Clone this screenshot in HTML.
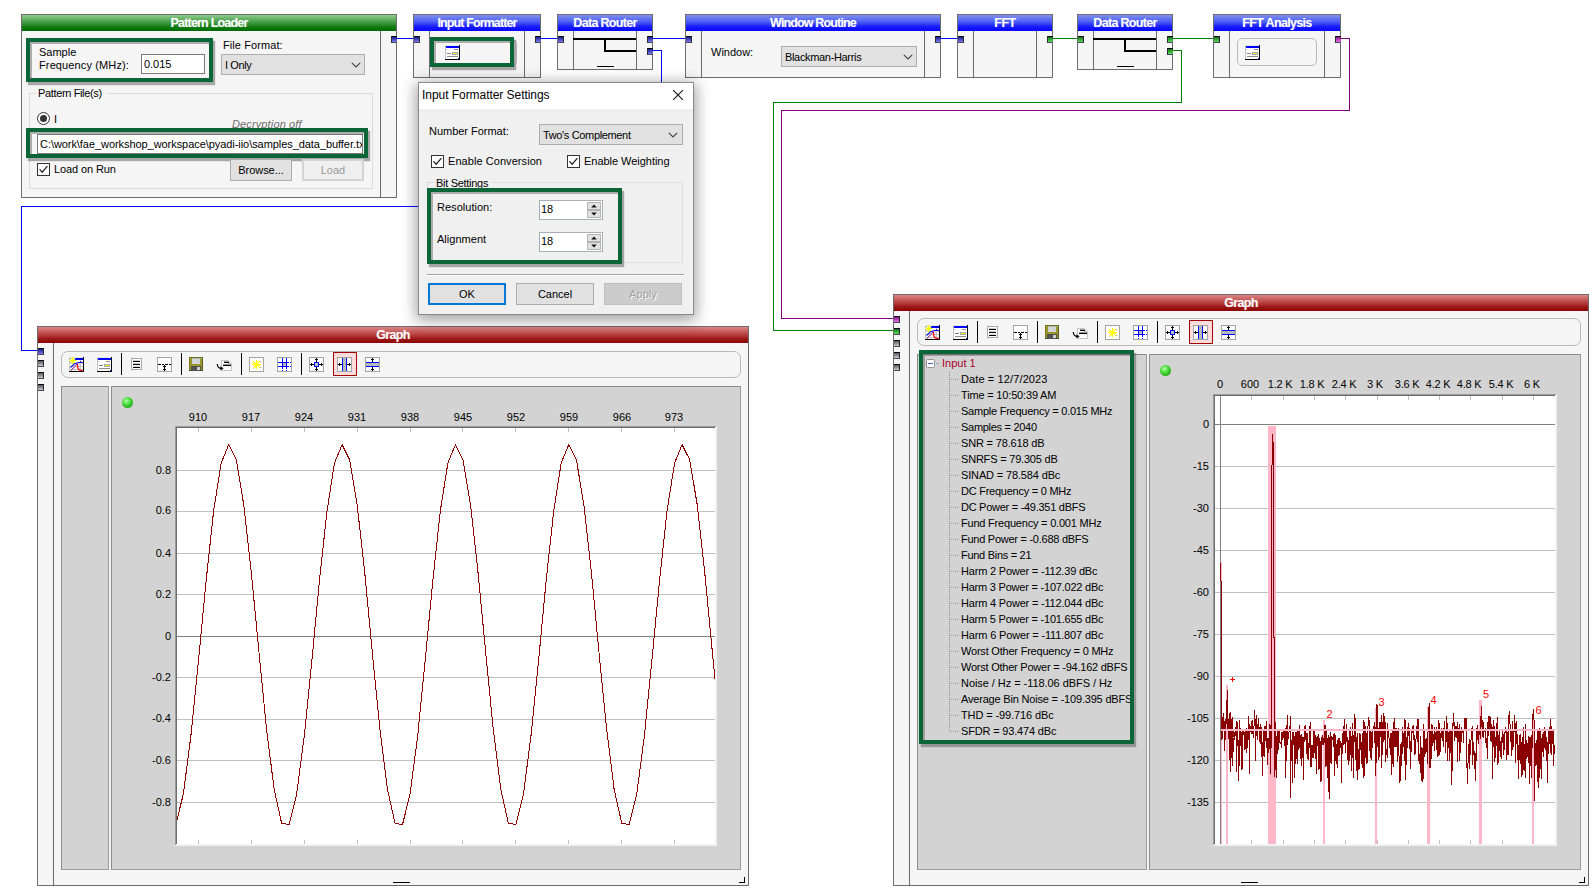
<!DOCTYPE html>
<html><head><meta charset="utf-8"><title>VisualAnalog</title>
<style>
html,body{margin:0;padding:0}
body{width:1596px;height:894px;position:relative;overflow:hidden;background:#fff;font-family:"Liberation Sans",sans-serif;font-size:11px;color:#000;line-height:13px}
div,span.a{position:absolute;box-sizing:border-box;white-space:nowrap}
.pn{border:1px solid #6c6c6c;background:#f5f5f5}
.tb{left:0;top:0;right:0;height:16px;color:#fff;font-weight:bold;font-size:12.5px;text-align:center;line-height:17px;letter-spacing:-0.8px;text-shadow:0 0 1px rgba(255,255,255,.35)}
.tb.b{background:linear-gradient(#7f90ee 0%,#4f62f4 40%,#1518ff 75%,#0505ff 100%)}
.tb.g{background:linear-gradient(#90cc90 0%,#4ca24c 40%,#117a11 75%,#006a00 100%)}
.tb.r{background:linear-gradient(#dc8585 0%,#c04c4c 40%,#9c1515 75%,#8e0505 100%)}
.vl{width:1px;background:#6c6c6c;top:16px;bottom:0}
.pt{width:6px;height:7px;border-top:1px solid #08081c;border-bottom:1px solid #4a4a5a}
.pt.L{border-right:1px solid #2a2a3a}
.pt.R{border-left:1px solid #2a2a3a}
.pb{background:linear-gradient(#1e1e7a,#4a4ac0 50%,#7c7cf0)}
.pg{background:linear-gradient(#1a6a1a,#34a834 50%,#58dc58)}
.pp{background:linear-gradient(#7a1a7a,#b83cb8 50%,#ec6cec)}
.py{background:linear-gradient(#585858,#8e8e8e 50%,#c8c8c8)}
.hl{border:4px solid #0a6636;box-shadow:2px 3px 1px 0 rgba(90,90,90,.5)}
.hl:before{content:"";position:absolute;left:0;top:0;right:-1px;bottom:-1px;box-shadow:inset 2px 2px 0 0 rgba(90,90,90,.45)}
.inp{background:#fff;border:1px solid #7a7a7a}
.cmb{background:#e1e1e1;border:1px solid #adadad}
.btn{background:#e1e1e1;border:1px solid #adadad;text-align:center}
.cb{width:13px;height:13px;background:#fff;border:1px solid #333}
.grp{border:1px solid #dcdcdc}
.sunk{background:#d3d3d3;border:1px solid #8c8c8c;border-right-color:#9c9c9c;border-bottom-color:#9c9c9c}
.tl{border:1px solid #b9b9b9;border-radius:7px;background:#f5f5f5}
.t{position:absolute;white-space:nowrap}
</style></head>
<body>
<svg style="position:absolute;left:0;top:0" width="1596" height="894" viewBox="0 0 1596 894" shape-rendering="crispEdges" fill="none"><path d="M396 38.5H414" stroke="#0000ff" stroke-width="1"/><path d="M540 38.5H558" stroke="#0000ff" stroke-width="1"/><path d="M652 38.5H686" stroke="#0000ff" stroke-width="1"/><path d="M652 50.5H661.5V206.5H21.5V350.5H38" stroke="#0000ff" stroke-width="1"/><path d="M940 38.5H958" stroke="#0000ff" stroke-width="1"/><path d="M1052 38.5H1078" stroke="#008000" stroke-width="1"/><path d="M1172 38.5H1214" stroke="#008000" stroke-width="1"/><path d="M1172 50.5H1181.5V102.5H773.5V330.5H894" stroke="#008000" stroke-width="1"/><path d="M1340 38.5H1349.5V110.5H781.5V318.5H894" stroke="#800080" stroke-width="1"/></svg>
<div class="pn" style="left:21px;top:14px;width:376px;height:184px"><div class="tb g" style="letter-spacing:-0.79px">Pattern Loader</div><div class="vl" style="left:358px"></div></div>
<div class="pt pb R" style="left:391px;top:36px"></div>
<div class="hl" style="left:26px;top:38px;width:187px;height:44px"></div>
<div class="t" style="left:39px;top:46px;">Sample</div>
<div class="t" style="left:39px;top:59px;letter-spacing:0.123px;">Frequency (MHz):</div>
<div class="inp" style="left:141px;top:54px;width:64px;height:20px"></div>
<div class="t" style="left:144px;top:58px;letter-spacing:-0.026px;">0.015</div>
<div class="t" style="left:223px;top:39px;letter-spacing:0.084px;">File Format:</div>
<div class="cmb" style="left:221px;top:54px;width:144px;height:21px"></div>
<div class="t" style="left:225px;top:59px;letter-spacing:-0.406px;">I Only</div>
<svg style="position:absolute;left:351px;top:62px" width="10" height="6" viewBox="0 0 10 6"><path d="M0.8 0.8L5 5L9.2 0.8" fill="none" stroke="#404040" stroke-width="1.1"/></svg>
<div class="grp" style="left:29px;top:93px;width:344px;height:96px"></div>
<div style="left:36px;top:86px;width:70px;height:13px;background:#f5f5f5"></div>
<div class="t" style="left:38px;top:87px;letter-spacing:-0.359px;">Pattern File(s)</div>
<div style="left:37px;top:112px;width:13px;height:13px;border-radius:7px;border:1px solid #333;background:#fff"></div>
<div style="left:40px;top:115px;width:7px;height:7px;border-radius:4px;background:#333"></div>
<div class="t" style="left:54px;top:113px;">I</div>
<div class="t" style="left:232px;top:118px;letter-spacing:0.130px;font-style:italic;color:#6d6d6d">Decryption off</div>
<div style="left:28px;top:130px;width:338px;height:27px;background:#f5f5f5"></div>
<div class="hl" style="left:26px;top:128px;width:342px;height:30px"></div>
<div class="inp" style="left:37px;top:134px;width:326px;height:20px;overflow:hidden"></div>
<div style="left:38px;top:135px;width:324px;height:18px;overflow:hidden"><span class="a" style="left:2px;top:3px;letter-spacing:-0.06px">C:\work\fae_workshop_workspace\pyadi-iio\samples_data_buffer.txt</span></div>
<div class="cb" style="left:37px;top:163px"></div><svg style="position:absolute;left:37px;top:163px" width="13" height="13" viewBox="0 0 13 13"><path d="M2.6 6.4L5.2 9.2L10.4 3.2" fill="none" stroke="#222" stroke-width="1.25"/></svg>
<div class="t" style="left:54px;top:163px;letter-spacing:-0.109px;">Load on Run</div>
<div class="btn" style="left:230px;top:159px;width:62px;height:22px;line-height:20px;letter-spacing:-0.040px;">Browse...</div>
<div class="btn" style="left:302px;top:159px;width:62px;height:22px;line-height:20px;color:#9a9a9a;background:#efefef;border:2px solid #d4d4d4;line-height:18px">Load</div>
<div class="pn" style="left:413px;top:14px;width:128px;height:64px"><div class="tb b" style="letter-spacing:-0.88px">Input Formatter</div><div class="vl" style="left:15px"></div><div class="vl" style="left:110px"></div></div>
<div class="pt pb L" style="left:414px;top:36px"></div>
<div class="pt pb R" style="left:535px;top:36px"></div>
<div class="tl" style="left:432px;top:39px;width:85px;height:27px;border-radius:5px"></div>
<div class="hl" style="left:430px;top:37px;width:84px;height:30px"></div>
<svg style="position:absolute;left:445px;top:45px" width="15" height="15" viewBox="0 0 15 15" shape-rendering="crispEdges"><rect x="0" y="0" width="15" height="15" fill="#fff"/><rect x="0" y="0" width="15" height="1" fill="#ececdc"/><rect x="0" y="1" width="1" height="13" fill="#c4c4c4"/><rect x="1" y="1" width="13" height="2" fill="#0000ff"/><rect x="1" y="4" width="1" height="1" fill="#a8a8a8"/><rect x="9" y="4" width="4" height="1" fill="#909090"/><rect x="2" y="8" width="4" height="1" fill="#808080"/><rect x="7" y="7" width="6" height="3" fill="#a4a4b0"/><rect x="8" y="8" width="4" height="1" fill="#ffff00"/><rect x="2" y="11" width="11" height="1" fill="#8c8c8c"/><rect x="0" y="14" width="15" height="1" fill="#000"/><rect x="14" y="0" width="1" height="15" fill="#000"/><rect x="13" y="13" width="1" height="1" fill="#0000ff"/></svg>
<div class="pn" style="left:557px;top:14px;width:96px;height:56px"><div class="tb b" style="letter-spacing:-0.68px">Data Router</div><div class="vl" style="left:15px"></div><div class="vl" style="left:78px"></div></div><div class="pt pb L" style="left:558px;top:36px"></div><div class="pt pb R" style="left:647px;top:36px"></div><div class="pt pb R" style="left:647px;top:48px"></div><div style="left:573px;top:38px;width:63px;height:2px;background:#000"></div><div style="left:604px;top:38px;width:2px;height:14px;background:#000"></div><div style="left:605px;top:50px;width:31px;height:2px;background:#000"></div><div style="left:597px;top:66px;width:17px;height:1px;background:#000"></div>
<div class="pn" style="left:685px;top:14px;width:256px;height:64px"><div class="tb b" style="letter-spacing:-0.85px">Window Routine</div><div class="vl" style="left:15px"></div><div class="vl" style="left:238px"></div></div>
<div class="pt pb L" style="left:686px;top:36px"></div>
<div class="pt pb R" style="left:935px;top:36px"></div>
<div class="t" style="left:711px;top:46px;">Window:</div>
<div class="cmb" style="left:781px;top:46px;width:136px;height:21px"></div>
<div class="t" style="left:785px;top:51px;letter-spacing:-0.333px;">Blackman-Harris</div>
<svg style="position:absolute;left:903px;top:54px" width="10" height="6" viewBox="0 0 10 6"><path d="M0.8 0.8L5 5L9.2 0.8" fill="none" stroke="#404040" stroke-width="1.1"/></svg>
<div class="pn" style="left:957px;top:14px;width:96px;height:64px"><div class="tb b" style="letter-spacing:-0.46px">FFT</div><div class="vl" style="left:15px"></div><div class="vl" style="left:78px"></div></div>
<div class="pt pb L" style="left:958px;top:36px"></div>
<div class="pt pg R" style="left:1047px;top:36px"></div>
<div class="pn" style="left:1077px;top:14px;width:96px;height:56px"><div class="tb b" style="letter-spacing:-0.68px">Data Router</div><div class="vl" style="left:15px"></div><div class="vl" style="left:78px"></div></div><div class="pt pg L" style="left:1078px;top:36px"></div><div class="pt pg R" style="left:1167px;top:36px"></div><div class="pt pg R" style="left:1167px;top:48px"></div><div style="left:1093px;top:38px;width:63px;height:2px;background:#000"></div><div style="left:1124px;top:38px;width:2px;height:14px;background:#000"></div><div style="left:1125px;top:50px;width:31px;height:2px;background:#000"></div><div style="left:1117px;top:66px;width:17px;height:1px;background:#000"></div>
<div class="pn" style="left:1213px;top:14px;width:128px;height:64px"><div class="tb b" style="letter-spacing:-0.67px">FFT Analysis</div><div class="vl" style="left:15px"></div><div class="vl" style="left:110px"></div></div>
<div class="pt pg L" style="left:1214px;top:36px"></div>
<div class="pt pp R" style="left:1335px;top:36px"></div>
<div class="tl" style="left:1237px;top:38px;width:80px;height:28px;border-radius:5px"></div>
<svg style="position:absolute;left:1245px;top:45px" width="15" height="15" viewBox="0 0 15 15" shape-rendering="crispEdges"><rect x="0" y="0" width="15" height="15" fill="#fff"/><rect x="0" y="0" width="15" height="1" fill="#ececdc"/><rect x="0" y="1" width="1" height="13" fill="#c4c4c4"/><rect x="1" y="1" width="13" height="2" fill="#0000ff"/><rect x="1" y="4" width="1" height="1" fill="#a8a8a8"/><rect x="9" y="4" width="4" height="1" fill="#909090"/><rect x="2" y="8" width="4" height="1" fill="#808080"/><rect x="7" y="7" width="6" height="3" fill="#a4a4b0"/><rect x="8" y="8" width="4" height="1" fill="#ffff00"/><rect x="2" y="11" width="11" height="1" fill="#8c8c8c"/><rect x="0" y="14" width="15" height="1" fill="#000"/><rect x="14" y="0" width="1" height="15" fill="#000"/><rect x="13" y="13" width="1" height="1" fill="#0000ff"/></svg>
<div class="pn" style="left:37px;top:326px;width:712px;height:560px"><div class="tb r" style="letter-spacing:-0.65px">Graph</div><div class="vl" style="left:15px"></div></div>
<div class="pt pb L" style="left:38px;top:348px"></div>
<div class="pt py L" style="left:38px;top:360px"></div>
<div class="pt py L" style="left:38px;top:372px"></div>
<div class="pt py L" style="left:38px;top:384px"></div>
<div class="tl" style="left:61px;top:351px;width:680px;height:27px"></div>
<svg style="position:absolute;left:69px;top:357px" width="15" height="15" viewBox="0 0 15 15" shape-rendering="crispEdges"><rect x="0" y="0" width="15" height="15" fill="#fff"/><rect x="0" y="0" width="15" height="1" fill="#ececdc"/><rect x="0" y="9" width="14" height="1" fill="#c4c4c4"/><rect x="0" y="12" width="14" height="1" fill="#c4c4c4"/><rect x="0" y="6" width="14" height="1" fill="#dcdcdc"/><rect x="11" y="3" width="1" height="11" fill="#c4c4c4"/><rect x="5" y="5" width="1" height="9" fill="#d4d4d4"/><rect x="0" y="1" width="1" height="13" fill="#c8c8c8"/><rect x="6" y="1" width="8" height="2" fill="#0000ff"/><path d="M1.5 10.5 L5 7 L8.5 5.8 Q9.5 5.5 10.5 5.5 H14" fill="none" stroke="#0000ff" stroke-width="1.1" shape-rendering="auto"/><path d="M2 13.5 L8.5 6.5" fill="none" stroke="#800080" stroke-width="1.1" stroke-dasharray="1.2 0.7" shape-rendering="auto"/><rect x="11" y="4" width="1" height="1" fill="#800080"/><path d="M8.5 7 C8.3 10 9.5 12.8 11 13.4 H13.6" fill="none" stroke="#ff0000" stroke-width="1.2" shape-rendering="auto"/><path d="M0 3.5H7.5M3.5 0V7.5M1 1L6.2 6.2M6.2 0.8L0.8 6.5" stroke="#ffff00" stroke-width="1.05" fill="none" shape-rendering="auto"/><rect x="3" y="3" width="1" height="1" fill="#ffff00"/><rect x="1" y="1" width="1" height="1" fill="#8a8ab0"/><rect x="5" y="1" width="1" height="1" fill="#b0b080"/><rect x="1" y="5" width="1" height="1" fill="#b0b0c0"/><rect x="0" y="14" width="15" height="1" fill="#000"/><rect x="14" y="0" width="1" height="15" fill="#000"/></svg>
<svg style="position:absolute;left:97px;top:357px" width="15" height="15" viewBox="0 0 15 15" shape-rendering="crispEdges"><rect x="0" y="0" width="15" height="15" fill="#fff"/><rect x="0" y="0" width="15" height="1" fill="#ececdc"/><rect x="0" y="1" width="1" height="13" fill="#c4c4c4"/><rect x="1" y="1" width="13" height="2" fill="#0000ff"/><rect x="1" y="4" width="1" height="1" fill="#a8a8a8"/><rect x="9" y="4" width="4" height="1" fill="#909090"/><rect x="2" y="8" width="4" height="1" fill="#808080"/><rect x="7" y="7" width="6" height="3" fill="#a4a4b0"/><rect x="8" y="8" width="4" height="1" fill="#ffff00"/><rect x="2" y="11" width="11" height="1" fill="#8c8c8c"/><rect x="0" y="14" width="15" height="1" fill="#000"/><rect x="14" y="0" width="1" height="15" fill="#000"/><rect x="13" y="13" width="1" height="1" fill="#0000ff"/></svg>
<svg style="position:absolute;left:131px;top:358px" width="11" height="12" viewBox="0 0 11 12" shape-rendering="crispEdges"><rect x="0" y="0" width="11" height="12" fill="#a8a8a8"/><rect x="1" y="1" width="9" height="10" fill="#fff"/><rect x="2" y="3" width="7" height="1" fill="#000"/><rect x="2" y="6" width="7" height="1" fill="#000"/><rect x="2" y="9" width="7" height="1" fill="#000"/><rect x="2" y="2" width="7" height="1" fill="#d0d0d0"/><rect x="2" y="5" width="7" height="1" fill="#d0d0d0"/><rect x="2" y="8" width="7" height="1" fill="#d0d0d0"/></svg>
<svg style="position:absolute;left:157px;top:357px" width="15" height="15" viewBox="0 0 15 15" shape-rendering="crispEdges"><rect x="0" y="0" width="15" height="15" fill="#a4a4a4"/><rect x="1" y="1" width="13" height="13" fill="#fff"/><rect x="1" y="7" width="3" height="1" fill="#000"/><rect x="5" y="7" width="2" height="1" fill="#000"/><rect x="8" y="7" width="3" height="1" fill="#000"/><rect x="12" y="7" width="2" height="1" fill="#000"/><rect x="7" y="8" width="1" height="6" fill="#000"/><rect x="6" y="9" width="3" height="1" fill="#000"/><rect x="6" y="12" width="3" height="1" fill="#000"/></svg>
<svg style="position:absolute;left:189px;top:357px" width="14" height="14" viewBox="0 0 14 14" shape-rendering="crispEdges"><rect x="0" y="0" width="14" height="14" fill="#98982c"/><rect x="0" y="0" width="14" height="1" fill="#6e6e20"/><rect x="0" y="0" width="1" height="14" fill="#7a7a24"/><rect x="13" y="0" width="1" height="14" fill="#5a5a18"/><rect x="0" y="13" width="14" height="1" fill="#4a4a14"/><rect x="3" y="1" width="8" height="6" fill="#d4d4d4"/><rect x="3" y="1" width="8" height="1" fill="#b8b8b8"/><rect x="2" y="9" width="10" height="5" fill="#505050"/><rect x="8" y="10" width="3" height="3" fill="#d0d0d0"/><rect x="12" y="1" width="1" height="1" fill="#e0e0e0"/></svg>
<svg style="position:absolute;left:216px;top:357px" width="17" height="15" viewBox="0 0 17 15" shape-rendering="crispEdges"><path d="M5.5 3.5H12L15.5 6.5V13.5H5.5Z" fill="#fff" stroke="#c4c4c4" stroke-width="1" shape-rendering="auto"/><path d="M12 3.5V6.5H15.5" fill="none" stroke="#c4c4c4" stroke-width="1" shape-rendering="auto"/><rect x="8" y="5" width="5" height="1" fill="#000"/><rect x="7" y="8" width="8" height="1" fill="#000"/><rect x="8" y="4" width="5" height="1" fill="#9a9a9a"/><rect x="7" y="7" width="8" height="1" fill="#9a9a9a"/><path d="M1.2 7 C1.6 10.4 3.4 11.6 6 11.4" fill="none" stroke="#000" stroke-width="1.2" shape-rendering="auto"/><path d="M4.4 9.2L7.6 11.4L4.4 13.4Z" fill="#000" shape-rendering="auto"/></svg>
<svg style="position:absolute;left:249px;top:357px" width="15" height="15" viewBox="0 0 15 15" shape-rendering="crispEdges"><rect x="0" y="0" width="15" height="15" fill="#a4a4a4"/><rect x="1" y="1" width="13" height="13" fill="#fff"/><path d="M3 7.5H12M7.5 3V12M4.2 4.2L10.8 10.8M10.8 4.2L4.2 10.8M3.6 5.8L11.4 9.2M5.8 11.4L9.2 3.6" stroke="#ffff00" stroke-width="1" fill="none" shape-rendering="auto"/><rect x="7" y="7" width="1" height="1" fill="#ffff00"/><rect x="11" y="4" width="1" height="1" fill="#b0b0b0"/><rect x="11" y="10" width="1" height="1" fill="#b0b0b0"/><rect x="4" y="11" width="1" height="1" fill="#c0c0c0"/></svg>
<svg style="position:absolute;left:277px;top:357px" width="15" height="15" viewBox="0 0 15 15" shape-rendering="crispEdges"><rect x="0" y="0" width="15" height="15" fill="#a4a4a4"/><rect x="1" y="1" width="13" height="13" fill="#fff"/><rect x="6" y="6" width="3" height="3" fill="#b8b8b8"/><rect x="5" y="1" width="1" height="11" fill="#0000ff"/><rect x="9" y="1" width="1" height="11" fill="#0000ff"/><rect x="1" y="5" width="11" height="1" fill="#0000ff"/><rect x="1" y="9" width="11" height="1" fill="#0000ff"/><rect x="13" y="5" width="1" height="1" fill="#0000ff"/><rect x="13" y="9" width="1" height="1" fill="#0000ff"/><rect x="5" y="13" width="1" height="1" fill="#0000ff"/><rect x="9" y="13" width="1" height="1" fill="#0000ff"/></svg>
<svg style="position:absolute;left:309px;top:357px" width="15" height="15" viewBox="0 0 15 15" shape-rendering="crispEdges"><rect x="0" y="0" width="15" height="15" fill="#a4a4a4"/><rect x="1" y="1" width="13" height="13" fill="#fff"/><rect x="5" y="5" width="5" height="5" fill="#0000ff"/><rect x="6" y="6" width="3" height="3" fill="#c0c0c0"/><rect x="7" y="2" width="1" height="3" fill="#000"/><rect x="7" y="10" width="1" height="3" fill="#000"/><rect x="2" y="7" width="3" height="1" fill="#000"/><rect x="10" y="7" width="3" height="1" fill="#000"/><rect x="6" y="2" width="3" height="1" fill="#000"/><rect x="7" y="1" width="1" height="1" fill="#000"/><rect x="6" y="12" width="3" height="1" fill="#000"/><rect x="7" y="13" width="1" height="1" fill="#000"/><rect x="2" y="6" width="1" height="3" fill="#000"/><rect x="1" y="7" width="1" height="1" fill="#000"/><rect x="12" y="6" width="1" height="3" fill="#000"/><rect x="13" y="7" width="1" height="1" fill="#000"/></svg>
<div style="left:333px;top:352px;width:24px;height:24px;background:#ffdcdc;border:1px solid #a00000"></div>
<svg style="position:absolute;left:337px;top:357px" width="15" height="15" viewBox="0 0 15 15" shape-rendering="crispEdges"><rect x="0" y="0" width="15" height="15" fill="#a4a4a4"/><rect x="1" y="1" width="13" height="13" fill="#fff"/><rect x="6" y="1" width="3" height="13" fill="#b8b8b8"/><rect x="5" y="1" width="1" height="13" fill="#0000ff"/><rect x="9" y="1" width="1" height="13" fill="#0000ff"/><rect x="1" y="7" width="4" height="1" fill="#000"/><rect x="2" y="6" width="1" height="3" fill="#000"/><rect x="10" y="7" width="4" height="1" fill="#000"/><rect x="12" y="6" width="1" height="3" fill="#000"/></svg>
<svg style="position:absolute;left:365px;top:357px" width="15" height="15" viewBox="0 0 15 15" shape-rendering="crispEdges"><rect x="0" y="0" width="15" height="15" fill="#a4a4a4"/><rect x="1" y="1" width="13" height="13" fill="#fff"/><rect x="1" y="6" width="13" height="3" fill="#b8b8b8"/><rect x="1" y="5" width="13" height="1" fill="#0000ff"/><rect x="1" y="9" width="13" height="1" fill="#0000ff"/><rect x="7" y="1" width="1" height="4" fill="#000"/><rect x="6" y="2" width="3" height="1" fill="#000"/><rect x="7" y="10" width="1" height="4" fill="#000"/><rect x="6" y="12" width="3" height="1" fill="#000"/></svg>
<div style="left:121px;top:353px;width:1px;height:22px;background:#000"></div>
<div style="left:181px;top:353px;width:1px;height:22px;background:#000"></div>
<div style="left:241px;top:353px;width:1px;height:22px;background:#000"></div>
<div style="left:301px;top:353px;width:1px;height:22px;background:#000"></div>
<div class="sunk" style="left:61px;top:386px;width:48px;height:484px"></div>
<div class="sunk" style="left:111px;top:386px;width:630px;height:484px"></div>
<div style="left:122px;top:397px;width:11px;height:11px;border-radius:6px;background:radial-gradient(circle at 40% 35%,#b8ffb0 0%,#50e040 35%,#28b020 70%,#1c8c18 100%)"></div>
<svg style="position:absolute;left:175px;top:426px" width="542" height="420" viewBox="0 0 542 420">
<rect x="0" y="0" width="542" height="420" fill="#fff"/>
<g shape-rendering="crispEdges"><rect x="2" y="44" width="538" height="1" fill="#c0c0c0"/><rect x="2" y="85" width="538" height="1" fill="#c0c0c0"/><rect x="2" y="127" width="538" height="1" fill="#c0c0c0"/><rect x="2" y="168" width="538" height="1" fill="#c0c0c0"/><rect x="2" y="251" width="538" height="1" fill="#c0c0c0"/><rect x="2" y="293" width="538" height="1" fill="#c0c0c0"/><rect x="2" y="334" width="538" height="1" fill="#c0c0c0"/><rect x="2" y="376" width="538" height="1" fill="#c0c0c0"/><rect x="2" y="210" width="538" height="1" fill="#808080"/><rect x="23" y="2" width="1" height="4" fill="#c0c0c0"/><rect x="23" y="414" width="1" height="4" fill="#c0c0c0"/><rect x="76" y="2" width="1" height="4" fill="#c0c0c0"/><rect x="76" y="414" width="1" height="4" fill="#c0c0c0"/><rect x="129" y="2" width="1" height="4" fill="#c0c0c0"/><rect x="129" y="414" width="1" height="4" fill="#c0c0c0"/><rect x="182" y="2" width="1" height="4" fill="#c0c0c0"/><rect x="182" y="414" width="1" height="4" fill="#c0c0c0"/><rect x="235" y="2" width="1" height="4" fill="#c0c0c0"/><rect x="235" y="414" width="1" height="4" fill="#c0c0c0"/><rect x="287" y="2" width="1" height="4" fill="#c0c0c0"/><rect x="287" y="414" width="1" height="4" fill="#c0c0c0"/><rect x="340" y="2" width="1" height="4" fill="#c0c0c0"/><rect x="340" y="414" width="1" height="4" fill="#c0c0c0"/><rect x="393" y="2" width="1" height="4" fill="#c0c0c0"/><rect x="393" y="414" width="1" height="4" fill="#c0c0c0"/><rect x="446" y="2" width="1" height="4" fill="#c0c0c0"/><rect x="446" y="414" width="1" height="4" fill="#c0c0c0"/><rect x="499" y="2" width="1" height="4" fill="#c0c0c0"/><rect x="499" y="414" width="1" height="4" fill="#c0c0c0"/></g>
<clipPath id="cs"><rect x="2" y="2" width="538" height="416"/></clipPath>
<polyline clip-path="url(#cs)" points="-14.3,363.1 -6.7,397.1 0.8,398.7 8.4,367.8 15.9,309.7 23.5,234.4 31.1,155.0 38.6,85.1 46.2,36.9 53.7,18.7 61.3,33.7 68.8,79.2 76.4,147.3 84.0,226.4 91.5,302.8 99.1,363.1 106.6,397.1 114.2,398.7 121.7,367.8 129.3,309.7 136.9,234.4 144.4,155.0 152.0,85.1 159.5,36.9 167.1,18.7 174.6,33.7 182.2,79.2 189.8,147.3 197.3,226.4 204.9,302.8 212.4,363.1 220.0,397.1 227.5,398.7 235.1,367.8 242.7,309.7 250.2,234.4 257.8,155.0 265.3,85.1 272.9,36.9 280.4,18.7 288.0,33.7 295.6,79.2 303.1,147.3 310.7,226.4 318.2,302.8 325.8,363.1 333.3,397.1 340.9,398.7 348.5,367.8 356.0,309.7 363.6,234.4 371.1,155.0 378.7,85.1 386.2,36.9 393.8,18.7 401.4,33.7 408.9,79.2 416.5,147.3 424.0,226.4 431.6,302.8 439.1,363.1 446.7,397.1 454.2,398.7 461.8,367.8 469.4,309.7 476.9,234.4 484.5,155.0 492.0,85.1 499.6,36.9 507.1,18.7 514.7,33.7 522.3,79.2 529.8,147.3 537.4,226.4 544.9,302.8 552.5,363.1 560.0,397.1" fill="none" stroke="#8e0000" stroke-width="1" shape-rendering="crispEdges"/>
<g shape-rendering="crispEdges"><rect x="0" y="418" width="542" height="2" fill="#f2f2f2"/><rect x="540" y="0" width="2" height="420" fill="#f2f2f2"/><rect x="0" y="0" width="541" height="1" fill="#9a9a9a"/><rect x="0" y="0" width="1" height="419" fill="#9a9a9a"/><rect x="1" y="1" width="539" height="1" fill="#6e6e6e"/><rect x="1" y="1" width="1" height="417" fill="#6e6e6e"/></g>
</svg>
<div class="t" style="left:188px;top:411px;width:20px;text-align:center">910</div>
<div class="t" style="left:241px;top:411px;width:20px;text-align:center">917</div>
<div class="t" style="left:294px;top:411px;width:20px;text-align:center">924</div>
<div class="t" style="left:347px;top:411px;width:20px;text-align:center">931</div>
<div class="t" style="left:400px;top:411px;width:20px;text-align:center">938</div>
<div class="t" style="left:453px;top:411px;width:20px;text-align:center">945</div>
<div class="t" style="left:506px;top:411px;width:20px;text-align:center">952</div>
<div class="t" style="left:559px;top:411px;width:20px;text-align:center">959</div>
<div class="t" style="left:612px;top:411px;width:20px;text-align:center">966</div>
<div class="t" style="left:664px;top:411px;width:20px;text-align:center">973</div>
<div class="t" style="left:130px;top:464px;width:41px;text-align:right">0.8</div>
<div class="t" style="left:130px;top:504px;width:41px;text-align:right">0.6</div>
<div class="t" style="left:130px;top:547px;width:41px;text-align:right">0.4</div>
<div class="t" style="left:130px;top:588px;width:41px;text-align:right">0.2</div>
<div class="t" style="left:130px;top:630px;width:41px;text-align:right">0</div>
<div class="t" style="left:130px;top:671px;width:41px;text-align:right">-0.2</div>
<div class="t" style="left:130px;top:712px;width:41px;text-align:right">-0.4</div>
<div class="t" style="left:130px;top:754px;width:41px;text-align:right">-0.6</div>
<div class="t" style="left:130px;top:796px;width:41px;text-align:right">-0.8</div>
<div style="left:393px;top:882px;width:17px;height:1px;background:#000"></div>
<div style="left:739px;top:882px;width:6px;height:1px;background:#000"></div><div style="left:744px;top:877px;width:1px;height:6px;background:#000"></div>
<div class="pn" style="left:893px;top:294px;width:696px;height:592px"><div class="tb r" style="letter-spacing:-0.65px">Graph</div><div class="vl" style="left:15px"></div></div>
<div class="pt pp L" style="left:894px;top:316px"></div>
<div class="pt pg L" style="left:894px;top:328px"></div>
<div class="pt py L" style="left:894px;top:340px"></div>
<div class="pt py L" style="left:894px;top:352px"></div>
<div class="pt py L" style="left:894px;top:364px"></div>
<div class="tl" style="left:917px;top:318px;width:664px;height:28px"></div>
<svg style="position:absolute;left:925px;top:325px" width="15" height="15" viewBox="0 0 15 15" shape-rendering="crispEdges"><rect x="0" y="0" width="15" height="15" fill="#fff"/><rect x="0" y="0" width="15" height="1" fill="#ececdc"/><rect x="0" y="9" width="14" height="1" fill="#c4c4c4"/><rect x="0" y="12" width="14" height="1" fill="#c4c4c4"/><rect x="0" y="6" width="14" height="1" fill="#dcdcdc"/><rect x="11" y="3" width="1" height="11" fill="#c4c4c4"/><rect x="5" y="5" width="1" height="9" fill="#d4d4d4"/><rect x="0" y="1" width="1" height="13" fill="#c8c8c8"/><rect x="6" y="1" width="8" height="2" fill="#0000ff"/><path d="M1.5 10.5 L5 7 L8.5 5.8 Q9.5 5.5 10.5 5.5 H14" fill="none" stroke="#0000ff" stroke-width="1.1" shape-rendering="auto"/><path d="M2 13.5 L8.5 6.5" fill="none" stroke="#800080" stroke-width="1.1" stroke-dasharray="1.2 0.7" shape-rendering="auto"/><rect x="11" y="4" width="1" height="1" fill="#800080"/><path d="M8.5 7 C8.3 10 9.5 12.8 11 13.4 H13.6" fill="none" stroke="#ff0000" stroke-width="1.2" shape-rendering="auto"/><path d="M0 3.5H7.5M3.5 0V7.5M1 1L6.2 6.2M6.2 0.8L0.8 6.5" stroke="#ffff00" stroke-width="1.05" fill="none" shape-rendering="auto"/><rect x="3" y="3" width="1" height="1" fill="#ffff00"/><rect x="1" y="1" width="1" height="1" fill="#8a8ab0"/><rect x="5" y="1" width="1" height="1" fill="#b0b080"/><rect x="1" y="5" width="1" height="1" fill="#b0b0c0"/><rect x="0" y="14" width="15" height="1" fill="#000"/><rect x="14" y="0" width="1" height="15" fill="#000"/></svg>
<svg style="position:absolute;left:953px;top:325px" width="15" height="15" viewBox="0 0 15 15" shape-rendering="crispEdges"><rect x="0" y="0" width="15" height="15" fill="#fff"/><rect x="0" y="0" width="15" height="1" fill="#ececdc"/><rect x="0" y="1" width="1" height="13" fill="#c4c4c4"/><rect x="1" y="1" width="13" height="2" fill="#0000ff"/><rect x="1" y="4" width="1" height="1" fill="#a8a8a8"/><rect x="9" y="4" width="4" height="1" fill="#909090"/><rect x="2" y="8" width="4" height="1" fill="#808080"/><rect x="7" y="7" width="6" height="3" fill="#a4a4b0"/><rect x="8" y="8" width="4" height="1" fill="#ffff00"/><rect x="2" y="11" width="11" height="1" fill="#8c8c8c"/><rect x="0" y="14" width="15" height="1" fill="#000"/><rect x="14" y="0" width="1" height="15" fill="#000"/><rect x="13" y="13" width="1" height="1" fill="#0000ff"/></svg>
<svg style="position:absolute;left:987px;top:326px" width="11" height="12" viewBox="0 0 11 12" shape-rendering="crispEdges"><rect x="0" y="0" width="11" height="12" fill="#a8a8a8"/><rect x="1" y="1" width="9" height="10" fill="#fff"/><rect x="2" y="3" width="7" height="1" fill="#000"/><rect x="2" y="6" width="7" height="1" fill="#000"/><rect x="2" y="9" width="7" height="1" fill="#000"/><rect x="2" y="2" width="7" height="1" fill="#d0d0d0"/><rect x="2" y="5" width="7" height="1" fill="#d0d0d0"/><rect x="2" y="8" width="7" height="1" fill="#d0d0d0"/></svg>
<svg style="position:absolute;left:1013px;top:325px" width="15" height="15" viewBox="0 0 15 15" shape-rendering="crispEdges"><rect x="0" y="0" width="15" height="15" fill="#a4a4a4"/><rect x="1" y="1" width="13" height="13" fill="#fff"/><rect x="1" y="7" width="3" height="1" fill="#000"/><rect x="5" y="7" width="2" height="1" fill="#000"/><rect x="8" y="7" width="3" height="1" fill="#000"/><rect x="12" y="7" width="2" height="1" fill="#000"/><rect x="7" y="8" width="1" height="6" fill="#000"/><rect x="6" y="9" width="3" height="1" fill="#000"/><rect x="6" y="12" width="3" height="1" fill="#000"/></svg>
<svg style="position:absolute;left:1045px;top:325px" width="14" height="14" viewBox="0 0 14 14" shape-rendering="crispEdges"><rect x="0" y="0" width="14" height="14" fill="#98982c"/><rect x="0" y="0" width="14" height="1" fill="#6e6e20"/><rect x="0" y="0" width="1" height="14" fill="#7a7a24"/><rect x="13" y="0" width="1" height="14" fill="#5a5a18"/><rect x="0" y="13" width="14" height="1" fill="#4a4a14"/><rect x="3" y="1" width="8" height="6" fill="#d4d4d4"/><rect x="3" y="1" width="8" height="1" fill="#b8b8b8"/><rect x="2" y="9" width="10" height="5" fill="#505050"/><rect x="8" y="10" width="3" height="3" fill="#d0d0d0"/><rect x="12" y="1" width="1" height="1" fill="#e0e0e0"/></svg>
<svg style="position:absolute;left:1072px;top:325px" width="17" height="15" viewBox="0 0 17 15" shape-rendering="crispEdges"><path d="M5.5 3.5H12L15.5 6.5V13.5H5.5Z" fill="#fff" stroke="#c4c4c4" stroke-width="1" shape-rendering="auto"/><path d="M12 3.5V6.5H15.5" fill="none" stroke="#c4c4c4" stroke-width="1" shape-rendering="auto"/><rect x="8" y="5" width="5" height="1" fill="#000"/><rect x="7" y="8" width="8" height="1" fill="#000"/><rect x="8" y="4" width="5" height="1" fill="#9a9a9a"/><rect x="7" y="7" width="8" height="1" fill="#9a9a9a"/><path d="M1.2 7 C1.6 10.4 3.4 11.6 6 11.4" fill="none" stroke="#000" stroke-width="1.2" shape-rendering="auto"/><path d="M4.4 9.2L7.6 11.4L4.4 13.4Z" fill="#000" shape-rendering="auto"/></svg>
<svg style="position:absolute;left:1105px;top:325px" width="15" height="15" viewBox="0 0 15 15" shape-rendering="crispEdges"><rect x="0" y="0" width="15" height="15" fill="#a4a4a4"/><rect x="1" y="1" width="13" height="13" fill="#fff"/><path d="M3 7.5H12M7.5 3V12M4.2 4.2L10.8 10.8M10.8 4.2L4.2 10.8M3.6 5.8L11.4 9.2M5.8 11.4L9.2 3.6" stroke="#ffff00" stroke-width="1" fill="none" shape-rendering="auto"/><rect x="7" y="7" width="1" height="1" fill="#ffff00"/><rect x="11" y="4" width="1" height="1" fill="#b0b0b0"/><rect x="11" y="10" width="1" height="1" fill="#b0b0b0"/><rect x="4" y="11" width="1" height="1" fill="#c0c0c0"/></svg>
<svg style="position:absolute;left:1133px;top:325px" width="15" height="15" viewBox="0 0 15 15" shape-rendering="crispEdges"><rect x="0" y="0" width="15" height="15" fill="#a4a4a4"/><rect x="1" y="1" width="13" height="13" fill="#fff"/><rect x="6" y="6" width="3" height="3" fill="#b8b8b8"/><rect x="5" y="1" width="1" height="11" fill="#0000ff"/><rect x="9" y="1" width="1" height="11" fill="#0000ff"/><rect x="1" y="5" width="11" height="1" fill="#0000ff"/><rect x="1" y="9" width="11" height="1" fill="#0000ff"/><rect x="13" y="5" width="1" height="1" fill="#0000ff"/><rect x="13" y="9" width="1" height="1" fill="#0000ff"/><rect x="5" y="13" width="1" height="1" fill="#0000ff"/><rect x="9" y="13" width="1" height="1" fill="#0000ff"/></svg>
<svg style="position:absolute;left:1165px;top:325px" width="15" height="15" viewBox="0 0 15 15" shape-rendering="crispEdges"><rect x="0" y="0" width="15" height="15" fill="#a4a4a4"/><rect x="1" y="1" width="13" height="13" fill="#fff"/><rect x="5" y="5" width="5" height="5" fill="#0000ff"/><rect x="6" y="6" width="3" height="3" fill="#c0c0c0"/><rect x="7" y="2" width="1" height="3" fill="#000"/><rect x="7" y="10" width="1" height="3" fill="#000"/><rect x="2" y="7" width="3" height="1" fill="#000"/><rect x="10" y="7" width="3" height="1" fill="#000"/><rect x="6" y="2" width="3" height="1" fill="#000"/><rect x="7" y="1" width="1" height="1" fill="#000"/><rect x="6" y="12" width="3" height="1" fill="#000"/><rect x="7" y="13" width="1" height="1" fill="#000"/><rect x="2" y="6" width="1" height="3" fill="#000"/><rect x="1" y="7" width="1" height="1" fill="#000"/><rect x="12" y="6" width="1" height="3" fill="#000"/><rect x="13" y="7" width="1" height="1" fill="#000"/></svg>
<div style="left:1189px;top:320px;width:24px;height:24px;background:#ffdcdc;border:1px solid #a00000"></div>
<svg style="position:absolute;left:1193px;top:325px" width="15" height="15" viewBox="0 0 15 15" shape-rendering="crispEdges"><rect x="0" y="0" width="15" height="15" fill="#a4a4a4"/><rect x="1" y="1" width="13" height="13" fill="#fff"/><rect x="6" y="1" width="3" height="13" fill="#b8b8b8"/><rect x="5" y="1" width="1" height="13" fill="#0000ff"/><rect x="9" y="1" width="1" height="13" fill="#0000ff"/><rect x="1" y="7" width="4" height="1" fill="#000"/><rect x="2" y="6" width="1" height="3" fill="#000"/><rect x="10" y="7" width="4" height="1" fill="#000"/><rect x="12" y="6" width="1" height="3" fill="#000"/></svg>
<svg style="position:absolute;left:1221px;top:325px" width="15" height="15" viewBox="0 0 15 15" shape-rendering="crispEdges"><rect x="0" y="0" width="15" height="15" fill="#a4a4a4"/><rect x="1" y="1" width="13" height="13" fill="#fff"/><rect x="1" y="6" width="13" height="3" fill="#b8b8b8"/><rect x="1" y="5" width="13" height="1" fill="#0000ff"/><rect x="1" y="9" width="13" height="1" fill="#0000ff"/><rect x="7" y="1" width="1" height="4" fill="#000"/><rect x="6" y="2" width="3" height="1" fill="#000"/><rect x="7" y="10" width="1" height="4" fill="#000"/><rect x="6" y="12" width="3" height="1" fill="#000"/></svg>
<div style="left:977px;top:321px;width:1px;height:22px;background:#000"></div>
<div style="left:1037px;top:321px;width:1px;height:22px;background:#000"></div>
<div style="left:1097px;top:321px;width:1px;height:22px;background:#000"></div>
<div style="left:1157px;top:321px;width:1px;height:22px;background:#000"></div>
<div class="sunk" style="left:917px;top:354px;width:230px;height:516px"></div>
<div class="sunk" style="left:1149px;top:354px;width:432px;height:516px"></div>
<div style="left:1160px;top:365px;width:11px;height:11px;border-radius:6px;background:radial-gradient(circle at 40% 35%,#b8ffb0 0%,#50e040 35%,#28b020 70%,#1c8c18 100%)"></div>
<div style="left:918px;top:355px;width:212px;height:390px;overflow:hidden"><div style="left:8px;top:4px;width:9px;height:9px;border:1px solid #919191;border-radius:1.5px;background:#fcfcfc"></div><div style="left:10px;top:8px;width:5px;height:1px;background:#4a5fb0"></div><div style="left:18px;top:8px;width:4px;height:1px;background:repeating-linear-gradient(90deg,#909090 0 1px,transparent 1px 2px)"></div><div style="left:31px;top:16px;width:1px;height:361px;background:repeating-linear-gradient(180deg,#909090 0 1px,transparent 1px 2px)"></div><div class="t" style="left:24px;top:2px;color:#a80028">Input 1</div><div style="left:33px;top:24px;width:8px;height:1px;background:repeating-linear-gradient(90deg,#909090 0 1px,transparent 1px 2px)"></div><div class="t" style="left:43px;top:18px;letter-spacing:0.116px;">Date = 12/7/2023</div><div style="left:33px;top:40px;width:8px;height:1px;background:repeating-linear-gradient(90deg,#909090 0 1px,transparent 1px 2px)"></div><div class="t" style="left:43px;top:34px;letter-spacing:-0.171px;">Time = 10:50:39 AM</div><div style="left:33px;top:56px;width:8px;height:1px;background:repeating-linear-gradient(90deg,#909090 0 1px,transparent 1px 2px)"></div><div class="t" style="left:43px;top:50px;letter-spacing:-0.241px;">Sample Frequency = 0.015 MHz</div><div style="left:33px;top:72px;width:8px;height:1px;background:repeating-linear-gradient(90deg,#909090 0 1px,transparent 1px 2px)"></div><div class="t" style="left:43px;top:66px;letter-spacing:-0.287px;">Samples = 2040</div><div style="left:33px;top:88px;width:8px;height:1px;background:repeating-linear-gradient(90deg,#909090 0 1px,transparent 1px 2px)"></div><div class="t" style="left:43px;top:82px;letter-spacing:-0.167px;">SNR = 78.618 dB</div><div style="left:33px;top:104px;width:8px;height:1px;background:repeating-linear-gradient(90deg,#909090 0 1px,transparent 1px 2px)"></div><div class="t" style="left:43px;top:98px;letter-spacing:-0.200px;">SNRFS = 79.305 dB</div><div style="left:33px;top:120px;width:8px;height:1px;background:repeating-linear-gradient(90deg,#909090 0 1px,transparent 1px 2px)"></div><div class="t" style="left:43px;top:114px;letter-spacing:-0.145px;">SINAD = 78.584 dBc</div><div style="left:33px;top:136px;width:8px;height:1px;background:repeating-linear-gradient(90deg,#909090 0 1px,transparent 1px 2px)"></div><div class="t" style="left:43px;top:130px;letter-spacing:-0.249px;">DC Frequency = 0 MHz</div><div style="left:33px;top:152px;width:8px;height:1px;background:repeating-linear-gradient(90deg,#909090 0 1px,transparent 1px 2px)"></div><div class="t" style="left:43px;top:146px;letter-spacing:-0.275px;">DC Power = -49.351 dBFS</div><div style="left:33px;top:168px;width:8px;height:1px;background:repeating-linear-gradient(90deg,#909090 0 1px,transparent 1px 2px)"></div><div class="t" style="left:43px;top:162px;letter-spacing:-0.204px;">Fund Frequency = 0.001 MHz</div><div style="left:33px;top:184px;width:8px;height:1px;background:repeating-linear-gradient(90deg,#909090 0 1px,transparent 1px 2px)"></div><div class="t" style="left:43px;top:178px;letter-spacing:-0.260px;">Fund Power = -0.688 dBFS</div><div style="left:33px;top:200px;width:8px;height:1px;background:repeating-linear-gradient(90deg,#909090 0 1px,transparent 1px 2px)"></div><div class="t" style="left:43px;top:194px;letter-spacing:-0.289px;">Fund Bins = 21</div><div style="left:33px;top:216px;width:8px;height:1px;background:repeating-linear-gradient(90deg,#909090 0 1px,transparent 1px 2px)"></div><div class="t" style="left:43px;top:210px;letter-spacing:-0.193px;">Harm 2 Power = -112.39 dBc</div><div style="left:33px;top:232px;width:8px;height:1px;background:repeating-linear-gradient(90deg,#909090 0 1px,transparent 1px 2px)"></div><div class="t" style="left:43px;top:226px;letter-spacing:-0.219px;">Harm 3 Power = -107.022 dBc</div><div style="left:33px;top:248px;width:8px;height:1px;background:repeating-linear-gradient(90deg,#909090 0 1px,transparent 1px 2px)"></div><div class="t" style="left:43px;top:242px;letter-spacing:-0.188px;">Harm 4 Power = -112.044 dBc</div><div style="left:33px;top:264px;width:8px;height:1px;background:repeating-linear-gradient(90deg,#909090 0 1px,transparent 1px 2px)"></div><div class="t" style="left:43px;top:258px;letter-spacing:-0.219px;">Harm 5 Power = -101.655 dBc</div><div style="left:33px;top:280px;width:8px;height:1px;background:repeating-linear-gradient(90deg,#909090 0 1px,transparent 1px 2px)"></div><div class="t" style="left:43px;top:274px;letter-spacing:-0.158px;">Harm 6 Power = -111.807 dBc</div><div style="left:33px;top:296px;width:8px;height:1px;background:repeating-linear-gradient(90deg,#909090 0 1px,transparent 1px 2px)"></div><div class="t" style="left:43px;top:290px;letter-spacing:-0.209px;">Worst Other Frequency = 0 MHz</div><div style="left:33px;top:312px;width:8px;height:1px;background:repeating-linear-gradient(90deg,#909090 0 1px,transparent 1px 2px)"></div><div class="t" style="left:43px;top:306px;letter-spacing:-0.232px;">Worst Other Power = -94.162 dBFS</div><div style="left:33px;top:328px;width:8px;height:1px;background:repeating-linear-gradient(90deg,#909090 0 1px,transparent 1px 2px)"></div><div class="t" style="left:43px;top:322px;letter-spacing:-0.055px;">Noise / Hz = -118.06 dBFS / Hz</div><div style="left:33px;top:344px;width:8px;height:1px;background:repeating-linear-gradient(90deg,#909090 0 1px,transparent 1px 2px)"></div><div class="t" style="left:43px;top:338px;letter-spacing:-0.190px;">Average Bin Noise = -109.395 dBFS</div><div style="left:33px;top:360px;width:8px;height:1px;background:repeating-linear-gradient(90deg,#909090 0 1px,transparent 1px 2px)"></div><div class="t" style="left:43px;top:354px;letter-spacing:-0.108px;">THD = -99.716 dBc</div><div style="left:33px;top:376px;width:8px;height:1px;background:repeating-linear-gradient(90deg,#909090 0 1px,transparent 1px 2px)"></div><div class="t" style="left:43px;top:370px;letter-spacing:-0.169px;">SFDR = 93.474 dBc</div></div>
<div class="hl" style="left:919px;top:350px;width:215px;height:394px"></div>
<svg style="position:absolute;left:1213px;top:394px" width="344" height="452" viewBox="0 0 344 452">
<rect x="0" y="0" width="344" height="452" fill="#fff"/>
<g shape-rendering="crispEdges"><rect x="2" y="72" width="340" height="1" fill="#c0c0c0"/><rect x="2" y="114" width="340" height="1" fill="#c0c0c0"/><rect x="2" y="156" width="340" height="1" fill="#c0c0c0"/><rect x="2" y="198" width="340" height="1" fill="#c0c0c0"/><rect x="2" y="240" width="340" height="1" fill="#c0c0c0"/><rect x="2" y="282" width="340" height="1" fill="#c0c0c0"/><rect x="2" y="324" width="340" height="1" fill="#c0c0c0"/><rect x="2" y="366" width="340" height="1" fill="#c0c0c0"/><rect x="2" y="408" width="340" height="1" fill="#c0c0c0"/><rect x="2" y="30" width="340" height="1" fill="#808080"/><rect x="7" y="2" width="1" height="448" fill="#808080"/><rect x="38" y="2" width="1" height="4" fill="#c0c0c0"/><rect x="38" y="446" width="1" height="4" fill="#c0c0c0"/><rect x="70" y="2" width="1" height="4" fill="#c0c0c0"/><rect x="70" y="446" width="1" height="4" fill="#c0c0c0"/><rect x="101" y="2" width="1" height="4" fill="#c0c0c0"/><rect x="101" y="446" width="1" height="4" fill="#c0c0c0"/><rect x="132" y="2" width="1" height="4" fill="#c0c0c0"/><rect x="132" y="446" width="1" height="4" fill="#c0c0c0"/><rect x="164" y="2" width="1" height="4" fill="#c0c0c0"/><rect x="164" y="446" width="1" height="4" fill="#c0c0c0"/><rect x="195" y="2" width="1" height="4" fill="#c0c0c0"/><rect x="195" y="446" width="1" height="4" fill="#c0c0c0"/><rect x="226" y="2" width="1" height="4" fill="#c0c0c0"/><rect x="226" y="446" width="1" height="4" fill="#c0c0c0"/><rect x="257" y="2" width="1" height="4" fill="#c0c0c0"/><rect x="257" y="446" width="1" height="4" fill="#c0c0c0"/><rect x="289" y="2" width="1" height="4" fill="#c0c0c0"/><rect x="289" y="446" width="1" height="4" fill="#c0c0c0"/><rect x="320" y="2" width="1" height="4" fill="#c0c0c0"/><rect x="320" y="446" width="1" height="4" fill="#c0c0c0"/></g>
<g shape-rendering="crispEdges"><rect x="55" y="32" width="8" height="418" fill="#ffb6c8"/><rect x="8" y="168" width="1" height="282" fill="#ffb6c8"/><rect x="13" y="291" width="2" height="159" fill="#ffb6c8"/><rect x="110" y="326" width="2" height="124" fill="#ffb6c8"/><rect x="162" y="314" width="2" height="136" fill="#ffb6c8"/><rect x="214" y="312" width="3" height="138" fill="#ffb6c8"/><rect x="266" y="306" width="3" height="144" fill="#ffb6c8"/><rect x="319" y="322" width="2" height="128" fill="#ffb6c8"/></g>
<clipPath id="cf"><rect x="2" y="2" width="340" height="448"/></clipPath>
<polyline clip-path="url(#cf)" points="7.5,168.6 7.9,178.0 8.3,208.5 8.7,272.0 9.0,346.1 9.4,328.4 9.8,327.8 10.2,319.0 10.6,335.0 11.0,326.1 11.3,337.4 11.7,357.3 12.1,342.9 12.5,324.6 12.9,330.6 13.3,329.2 13.6,323.4 14.0,305.9 14.4,296.1 14.8,323.1 15.2,345.2 15.6,325.3 15.9,331.3 16.3,319.0 16.7,328.4 17.1,377.7 17.5,343.6 17.9,317.9 18.2,335.9 18.6,363.9 19.0,337.2 19.4,322.8 19.8,372.1 20.2,344.9 20.5,343.5 20.9,334.8 21.3,344.5 21.7,345.9 22.1,340.9 22.5,332.7 22.8,334.8 23.2,338.7 23.6,378.4 24.0,327.4 24.4,343.7 24.8,336.9 25.1,357.6 25.5,345.9 25.9,387.3 26.3,335.1 26.7,326.5 27.1,336.4 27.4,352.4 27.8,346.5 28.2,337.6 28.6,361.7 29.0,376.3 29.4,352.8 29.7,335.7 30.1,336.1 30.5,340.4 30.9,339.8 31.3,338.0 31.7,356.2 32.0,341.8 32.4,335.6 32.8,355.0 33.2,333.6 33.6,359.1 34.0,354.3 34.4,339.5 34.7,344.9 35.1,334.7 35.5,321.7 35.9,331.9 36.3,380.3 36.7,330.2 37.0,334.9 37.4,332.7 37.8,338.4 38.2,327.3 38.6,340.0 39.0,339.7 39.3,334.1 39.7,326.1 40.1,343.9 40.5,335.9 40.9,334.1 41.3,327.4 41.6,315.7 42.0,327.0 42.4,325.2 42.8,367.2 43.2,321.1 43.6,327.7 43.9,324.1 44.3,345.0 44.7,345.2 45.1,329.3 45.5,324.1 45.9,326.0 46.2,347.8 46.6,343.3 47.0,333.2 47.4,329.6 47.8,349.5 48.2,343.9 48.5,333.4 48.9,355.1 49.3,381.6 49.7,354.8 50.1,345.9 50.5,337.4 50.8,360.8 51.2,362.2 51.6,362.8 52.0,331.7 52.4,346.7 52.8,333.6 53.1,345.7 53.5,326.9 53.9,346.9 54.3,371.3 54.7,344.2 55.1,344.2 55.4,344.8 55.8,359.3 56.2,350.2 56.6,331.9 57.0,330.1 57.4,342.5 57.7,379.8 58.1,347.4 58.5,140.4 58.9,79.8 59.3,49.7 59.7,40.3 60.1,49.7 60.4,79.8 60.8,140.5 61.2,337.1 61.6,382.7 62.0,350.5 62.4,327.9 62.7,375.9 63.1,341.7 63.5,384.0 63.9,354.5 64.3,351.8 64.7,359.8 65.0,334.9 65.4,355.5 65.8,353.7 66.2,335.1 66.6,348.1 67.0,348.7 67.3,349.7 67.7,348.9 68.1,348.2 68.5,353.5 68.9,338.6 69.3,338.7 69.6,346.2 70.0,344.9 70.4,337.4 70.8,336.3 71.2,338.1 71.6,352.3 71.9,336.2 72.3,383.5 72.7,343.9 73.1,331.5 73.5,339.2 73.9,366.8 74.2,327.7 74.6,321.4 75.0,341.3 75.4,343.1 75.8,345.4 76.2,332.1 76.5,337.1 76.9,337.8 77.3,321.6 77.7,404.3 78.1,356.9 78.5,346.0 78.8,361.1 79.2,348.0 79.6,389.1 80.0,337.6 80.4,340.3 80.8,339.2 81.1,355.3 81.5,342.3 81.9,383.9 82.3,338.1 82.7,360.4 83.1,338.0 83.4,350.4 83.8,359.3 84.2,370.1 84.6,346.4 85.0,335.4 85.4,350.1 85.8,355.9 86.1,342.5 86.5,330.6 86.9,353.7 87.3,348.6 87.7,341.0 88.1,371.5 88.4,352.5 88.8,339.8 89.2,346.2 89.6,354.2 90.0,363.9 90.4,350.0 90.7,385.6 91.1,332.5 91.5,340.6 91.9,347.8 92.3,341.5 92.7,331.5 93.0,338.5 93.4,356.0 93.8,360.1 94.2,360.3 94.6,339.4 95.0,365.3 95.3,354.9 95.7,366.2 96.1,344.3 96.5,354.2 96.9,332.2 97.3,339.3 97.6,327.6 98.0,372.7 98.4,373.2 98.8,351.3 99.2,354.0 99.6,364.4 99.9,351.4 100.3,364.2 100.7,335.7 101.1,358.6 101.5,336.7 101.9,344.5 102.2,354.8 102.6,364.7 103.0,341.1 103.4,380.0 103.8,344.3 104.2,343.3 104.5,344.7 104.9,341.9 105.3,375.8 105.7,340.5 106.1,354.9 106.5,344.4 106.8,375.1 107.2,346.7 107.6,363.8 108.0,387.9 108.4,374.1 108.8,343.4 109.1,342.5 109.5,340.7 109.9,350.8 110.3,343.9 110.7,350.5 111.1,348.1 111.4,338.2 111.8,331.6 112.2,331.6 112.6,355.4 113.0,372.9 113.4,357.1 113.8,337.2 114.1,383.5 114.5,352.2 114.9,345.3 115.3,341.3 115.7,373.4 116.1,404.6 116.4,342.8 116.8,351.8 117.2,369.3 117.6,337.7 118.0,346.7 118.4,370.0 118.7,342.5 119.1,345.5 119.5,345.9 119.9,343.3 120.3,352.5 120.7,352.1 121.0,340.3 121.4,382.2 121.8,339.0 122.2,342.0 122.6,366.7 123.0,348.9 123.3,367.0 123.7,356.3 124.1,373.8 124.5,348.9 124.9,346.6 125.3,344.5 125.6,354.3 126.0,361.9 126.4,343.6 126.8,361.0 127.2,348.3 127.6,353.4 127.9,346.8 128.3,353.5 128.7,388.6 129.1,353.3 129.5,354.8 129.9,342.8 130.2,332.3 130.6,350.7 131.0,336.8 131.4,324.8 131.8,340.2 132.2,358.6 132.5,350.3 132.9,336.0 133.3,331.0 133.7,330.4 134.1,353.3 134.5,342.8 134.8,361.1 135.2,370.6 135.6,345.9 136.0,348.0 136.4,335.2 136.8,366.9 137.1,337.9 137.5,332.9 137.9,355.0 138.3,377.0 138.7,354.6 139.1,338.4 139.5,329.0 139.8,343.4 140.2,383.9 140.6,354.4 141.0,341.0 141.4,348.4 141.8,319.8 142.1,326.3 142.5,345.3 142.9,366.4 143.3,358.6 143.7,343.0 144.1,386.1 144.4,338.9 144.8,342.9 145.2,374.3 145.6,354.6 146.0,376.2 146.4,359.3 146.7,339.5 147.1,342.7 147.5,355.9 147.9,340.4 148.3,369.8 148.7,351.9 149.0,354.9 149.4,373.6 149.8,339.0 150.2,383.5 150.6,326.5 151.0,348.1 151.3,327.6 151.7,382.3 152.1,359.0 152.5,338.0 152.9,331.6 153.3,362.4 153.6,339.4 154.0,370.2 154.4,334.8 154.8,338.9 155.2,326.2 155.6,326.3 155.9,323.5 156.3,350.6 156.7,326.5 157.1,364.3 157.5,350.7 157.9,335.2 158.2,358.2 158.6,366.4 159.0,338.3 159.4,353.7 159.8,340.5 160.2,333.3 160.5,333.1 160.9,332.4 161.3,349.4 161.7,328.5 162.1,334.0 162.5,381.7 162.8,338.8 163.2,368.5 163.6,316.5 164.0,310.2 164.4,333.3 164.8,352.8 165.2,337.3 165.5,333.7 165.9,366.3 166.3,353.1 166.7,329.3 167.1,328.1 167.5,331.7 167.8,342.6 168.2,321.0 168.6,374.4 169.0,355.4 169.4,360.6 169.8,352.1 170.1,319.4 170.5,332.7 170.9,348.2 171.3,338.8 171.7,321.6 172.1,330.1 172.4,346.1 172.8,367.7 173.2,355.6 173.6,355.1 174.0,356.9 174.4,363.8 174.7,329.5 175.1,337.2 175.5,342.5 175.9,342.8 176.3,346.7 176.7,354.3 177.0,353.3 177.4,342.0 177.8,338.6 178.2,380.5 178.6,338.7 179.0,372.8 179.3,337.3 179.7,362.5 180.1,372.5 180.5,363.9 180.9,329.6 181.3,323.9 181.6,331.5 182.0,353.0 182.4,348.1 182.8,334.5 183.2,343.0 183.6,334.4 183.9,346.9 184.3,368.4 184.7,339.2 185.1,334.2 185.5,344.5 185.9,359.3 186.2,366.1 186.6,363.6 187.0,389.0 187.4,350.0 187.8,357.3 188.2,348.0 188.5,371.9 188.9,371.4 189.3,332.7 189.7,349.4 190.1,338.7 190.5,350.2 190.9,345.3 191.2,366.5 191.6,346.6 192.0,325.5 192.4,330.1 192.8,386.4 193.2,356.6 193.5,343.4 193.9,350.0 194.3,354.0 194.7,349.1 195.1,329.4 195.5,331.2 195.8,341.5 196.2,334.6 196.6,334.8 197.0,355.2 197.4,374.6 197.8,369.5 198.1,339.4 198.5,357.7 198.9,336.6 199.3,339.3 199.7,331.6 200.1,340.6 200.4,330.9 200.8,335.1 201.2,354.5 201.6,341.2 202.0,361.2 202.4,348.4 202.7,356.5 203.1,342.2 203.5,342.2 203.9,332.2 204.3,341.9 204.7,348.2 205.0,324.8 205.4,339.4 205.8,364.5 206.2,369.6 206.6,370.1 207.0,360.3 207.3,378.9 207.7,341.6 208.1,371.6 208.5,386.5 208.9,353.1 209.3,356.1 209.6,374.4 210.0,388.4 210.4,330.4 210.8,350.5 211.2,336.4 211.6,355.6 211.9,362.8 212.3,351.9 212.7,349.1 213.1,343.8 213.5,352.1 213.9,357.4 214.2,357.3 214.6,370.0 215.0,338.7 215.4,323.2 215.8,318.1 216.2,308.7 216.6,312.9 216.9,374.0 217.3,372.8 217.7,366.1 218.1,329.9 218.5,359.0 218.9,365.2 219.2,331.5 219.6,333.6 220.0,341.5 220.4,343.9 220.8,339.6 221.2,356.7 221.5,332.6 221.9,347.7 222.3,342.9 222.7,343.3 223.1,336.7 223.5,332.9 223.8,353.4 224.2,358.1 224.6,336.3 225.0,363.0 225.4,347.1 225.8,325.7 226.1,330.5 226.5,347.6 226.9,361.1 227.3,346.0 227.7,358.0 228.1,334.2 228.4,344.3 228.8,338.8 229.2,335.1 229.6,342.8 230.0,346.6 230.4,353.2 230.7,334.2 231.1,333.9 231.5,326.6 231.9,332.8 232.3,344.1 232.7,359.3 233.0,349.1 233.4,329.0 233.8,322.4 234.2,334.3 234.6,367.0 235.0,345.8 235.3,354.4 235.7,342.3 236.1,336.5 236.5,360.1 236.9,367.0 237.3,335.2 237.6,358.6 238.0,348.9 238.4,391.1 238.8,335.6 239.2,376.7 239.6,337.1 239.9,329.0 240.3,332.3 240.7,318.7 241.1,331.0 241.5,343.9 241.9,347.2 242.2,335.3 242.6,332.1 243.0,343.4 243.4,343.5 243.8,337.6 244.2,327.6 244.6,367.6 244.9,340.3 245.3,346.3 245.7,347.5 246.1,329.9 246.5,367.2 246.9,343.7 247.2,336.3 247.6,359.3 248.0,343.1 248.4,348.4 248.8,332.9 249.2,336.3 249.5,337.4 249.9,338.7 250.3,335.4 250.7,348.9 251.1,332.5 251.5,331.7 251.8,324.3 252.2,324.0 252.6,331.3 253.0,337.0 253.4,324.3 253.8,339.0 254.1,390.2 254.5,376.9 254.9,371.8 255.3,360.7 255.7,358.4 256.1,347.5 256.4,374.7 256.8,344.6 257.2,354.6 257.6,361.0 258.0,346.0 258.4,344.8 258.7,339.4 259.1,332.4 259.5,371.3 259.9,364.2 260.3,348.5 260.7,348.8 261.0,361.0 261.4,357.4 261.8,359.9 262.2,386.5 262.6,358.7 263.0,362.2 263.3,366.6 263.7,342.0 264.1,331.7 264.5,331.5 264.9,344.8 265.3,349.5 265.6,343.6 266.0,335.9 266.4,341.3 266.8,336.4 267.2,344.8 267.6,324.6 267.9,326.4 268.3,311.7 268.7,325.3 269.1,334.4 269.5,325.9 269.9,343.1 270.3,343.6 270.6,328.3 271.0,336.2 271.4,335.6 271.8,337.8 272.2,334.4 272.6,334.4 272.9,346.8 273.3,353.6 273.7,349.6 274.1,343.2 274.5,364.7 274.9,327.8 275.2,342.4 275.6,335.9 276.0,321.9 276.4,337.1 276.8,326.0 277.2,342.3 277.5,346.9 277.9,322.8 278.3,347.5 278.7,346.8 279.1,333.3 279.5,385.0 279.8,367.4 280.2,341.2 280.6,325.9 281.0,331.9 281.4,337.8 281.8,367.7 282.1,361.9 282.5,343.1 282.9,352.8 283.3,345.5 283.7,352.4 284.1,322.7 284.4,337.3 284.8,370.5 285.2,361.1 285.6,368.9 286.0,340.8 286.4,341.3 286.7,336.2 287.1,363.0 287.5,347.7 287.9,349.6 288.3,342.7 288.7,364.7 289.0,345.1 289.4,339.1 289.8,335.3 290.2,360.9 290.6,357.3 291.0,340.5 291.3,340.1 291.7,356.1 292.1,332.7 292.5,337.2 292.9,333.0 293.3,353.4 293.6,365.7 294.0,337.1 294.4,349.6 294.8,360.3 295.2,361.3 295.6,337.7 296.0,321.1 296.3,316.6 296.7,324.0 297.1,331.5 297.5,346.2 297.9,347.8 298.3,336.4 298.6,362.4 299.0,357.7 299.4,330.4 299.8,326.7 300.2,344.1 300.6,353.2 300.9,338.4 301.3,336.2 301.7,320.8 302.1,330.8 302.5,368.8 302.9,365.0 303.2,326.7 303.6,331.7 304.0,345.2 304.4,340.0 304.8,366.1 305.2,357.7 305.5,385.2 305.9,351.4 306.3,366.2 306.7,341.8 307.1,340.4 307.5,370.2 307.8,357.0 308.2,347.6 308.6,369.0 309.0,383.0 309.4,352.1 309.8,368.8 310.1,333.3 310.5,356.9 310.9,375.8 311.3,350.1 311.7,352.9 312.1,383.5 312.4,330.3 312.8,349.3 313.2,346.5 313.6,364.8 314.0,348.3 314.4,363.4 314.7,354.3 315.1,348.2 315.5,341.8 315.9,368.5 316.3,364.4 316.7,389.9 317.0,343.5 317.4,342.9 317.8,357.1 318.2,383.8 318.6,359.8 319.0,340.8 319.3,354.0 319.7,336.9 320.1,315.4 320.5,315.4 320.9,319.2 321.3,344.1 321.7,406.7 322.0,372.1 322.4,362.7 322.8,349.2 323.2,367.6 323.6,370.9 324.0,345.9 324.3,337.2 324.7,365.5 325.1,393.9 325.5,337.3 325.9,339.3 326.3,384.0 326.6,352.7 327.0,334.1 327.4,354.5 327.8,374.9 328.2,343.7 328.6,385.2 328.9,364.6 329.3,342.3 329.7,345.2 330.1,338.0 330.5,341.8 330.9,362.6 331.2,342.4 331.6,332.7 332.0,341.6 332.4,355.6 332.8,334.9 333.2,367.2 333.5,357.3 333.9,342.6 334.3,388.5 334.7,347.8 335.1,356.0 335.5,359.5 335.8,335.3 336.2,350.2 336.6,333.5 337.0,337.5 337.4,325.3 337.8,359.0 338.1,331.9 338.5,361.4 338.9,351.3 339.3,345.6 339.7,334.9 340.1,336.3 340.4,371.5 340.8,340.2 341.2,360.3 341.6,352.7 342.0,351.9 342.4,351.7" fill="none" stroke="#8b0000" stroke-width="1" stroke-linejoin="bevel" shape-rendering="crispEdges"/>
<rect x="8" y="335" width="334" height="2" fill="#ffb6c8" shape-rendering="crispEdges"/>
<text x="113.5" y="324.0" font-family="Liberation Sans, sans-serif" font-size="11" fill="#ff0000">2</text>
<text x="165.5" y="311.5" font-family="Liberation Sans, sans-serif" font-size="11" fill="#ff0000">3</text>
<text x="217.5" y="310.0" font-family="Liberation Sans, sans-serif" font-size="11" fill="#ff0000">4</text>
<text x="270.0" y="304.0" font-family="Liberation Sans, sans-serif" font-size="11" fill="#ff0000">5</text>
<text x="322.5" y="319.5" font-family="Liberation Sans, sans-serif" font-size="11" fill="#ff0000">6</text>
<g shape-rendering="crispEdges"><rect x="17" y="285" width="5" height="1" fill="#ff0000"/><rect x="19" y="283" width="1" height="5" fill="#ff0000"/></g>
<g shape-rendering="crispEdges"><rect x="0" y="450" width="344" height="2" fill="#f2f2f2"/><rect x="342" y="0" width="2" height="452" fill="#f2f2f2"/><rect x="0" y="0" width="343" height="1" fill="#9a9a9a"/><rect x="0" y="0" width="1" height="451" fill="#9a9a9a"/><rect x="1" y="1" width="341" height="1" fill="#6e6e6e"/><rect x="1" y="1" width="1" height="449" fill="#6e6e6e"/></g>
</svg>
<div class="t" style="left:1205px;top:378px;width:30px;text-align:center;">0</div>
<div class="t" style="left:1235px;top:378px;width:30px;text-align:center;">600</div>
<div class="t" style="left:1265px;top:378px;width:30px;text-align:center;letter-spacing:-0.24px">1.2 K</div>
<div class="t" style="left:1297px;top:378px;width:30px;text-align:center;letter-spacing:-0.24px">1.8 K</div>
<div class="t" style="left:1329px;top:378px;width:30px;text-align:center;letter-spacing:-0.24px">2.4 K</div>
<div class="t" style="left:1360px;top:378px;width:30px;text-align:center;letter-spacing:-0.24px">3 K</div>
<div class="t" style="left:1392px;top:378px;width:30px;text-align:center;letter-spacing:-0.24px">3.6 K</div>
<div class="t" style="left:1423px;top:378px;width:30px;text-align:center;letter-spacing:-0.24px">4.2 K</div>
<div class="t" style="left:1454px;top:378px;width:30px;text-align:center;letter-spacing:-0.24px">4.8 K</div>
<div class="t" style="left:1486px;top:378px;width:30px;text-align:center;letter-spacing:-0.24px">5.4 K</div>
<div class="t" style="left:1517px;top:378px;width:30px;text-align:center;letter-spacing:-0.24px">6 K</div>
<div class="t" style="left:1170px;top:418px;width:39px;text-align:right">0</div>
<div class="t" style="left:1170px;top:460px;width:39px;text-align:right">-15</div>
<div class="t" style="left:1170px;top:502px;width:39px;text-align:right">-30</div>
<div class="t" style="left:1170px;top:544px;width:39px;text-align:right">-45</div>
<div class="t" style="left:1170px;top:586px;width:39px;text-align:right">-60</div>
<div class="t" style="left:1170px;top:628px;width:39px;text-align:right">-75</div>
<div class="t" style="left:1170px;top:670px;width:39px;text-align:right">-90</div>
<div class="t" style="left:1170px;top:712px;width:39px;text-align:right">-105</div>
<div class="t" style="left:1170px;top:754px;width:39px;text-align:right">-120</div>
<div class="t" style="left:1170px;top:796px;width:39px;text-align:right">-135</div>
<div style="left:1241px;top:882px;width:17px;height:1px;background:#000"></div>
<div style="left:1579px;top:882px;width:6px;height:1px;background:#000"></div><div style="left:1584px;top:877px;width:1px;height:6px;background:#000"></div>
<div style="left:418px;top:82px;width:276px;height:233px;background:#f0f0f0;border:1px solid #8a8a8a;box-shadow:0 3px 14px 2px rgba(0,0,0,.38)"><div style="left:0;top:0;right:0;height:26px;background:#fff"></div></div>
<div class="t" style="left:422px;top:88px;font-size:12px;line-height:15px;letter-spacing:-0.05px">Input Formatter Settings</div>
<svg style="position:absolute;left:672px;top:89px" width="12" height="12" viewBox="0 0 12 12"><path d="M1.1 1.1L10.9 10.9M10.9 1.1L1.1 10.9" stroke="#111" stroke-width="1.1" fill="none"/></svg>
<div class="t" style="left:429px;top:125px;letter-spacing:-0.027px;">Number Format:</div>
<div class="cmb" style="left:539px;top:124px;width:144px;height:21px"></div>
<div class="t" style="left:543px;top:129px;letter-spacing:-0.350px;">Two's Complement</div>
<svg style="position:absolute;left:668px;top:132px" width="10" height="6" viewBox="0 0 10 6"><path d="M0.8 0.8L5 5L9.2 0.8" fill="none" stroke="#404040" stroke-width="1.1"/></svg>
<div class="cb" style="left:431px;top:155px"></div><svg style="position:absolute;left:431px;top:155px" width="13" height="13" viewBox="0 0 13 13"><path d="M2.6 6.4L5.2 9.2L10.4 3.2" fill="none" stroke="#222" stroke-width="1.25"/></svg>
<div class="t" style="left:448px;top:155px;letter-spacing:0.062px;">Enable Conversion</div>
<div class="cb" style="left:567px;top:155px"></div><svg style="position:absolute;left:567px;top:155px" width="13" height="13" viewBox="0 0 13 13"><path d="M2.6 6.4L5.2 9.2L10.4 3.2" fill="none" stroke="#222" stroke-width="1.25"/></svg>
<div class="t" style="left:584px;top:155px;letter-spacing:-0.033px;">Enable Weighting</div>
<div class="grp" style="left:427px;top:182px;width:256px;height:81px"></div>
<div style="left:434px;top:177px;width:58px;height:13px;background:#f0f0f0"></div>
<div class="t" style="left:436px;top:177px;letter-spacing:-0.295px;">Bit Settings</div>
<div style="left:429px;top:190px;width:191px;height:72px;background:#f0f0f0"></div>
<div class="hl" style="left:427px;top:188px;width:195px;height:76px"></div>
<div class="t" style="left:437px;top:201px;letter-spacing:0.023px;">Resolution:</div>
<div class="inp" style="left:539px;top:200px;width:64px;height:20px;border-color:#a9adb6"></div><div class="t" style="left:541px;top:203px;">18</div><div style="left:587px;top:202px;width:14px;height:8px;background:#e1e1e1;border:1px solid #b4b4b4"></div><div style="left:587px;top:210px;width:14px;height:8px;background:#e1e1e1;border:1px solid #b4b4b4"></div><svg style="position:absolute;left:587px;top:202px" width="14" height="16" viewBox="0 0 14 16"><path d="M4.2 5.6L7 2.6L9.8 5.6Z M4.2 10.4L7 13.4L9.8 10.4Z" fill="#111"/></svg>
<div class="t" style="left:437px;top:233px;letter-spacing:0.031px;">Alignment</div>
<div class="inp" style="left:539px;top:232px;width:64px;height:20px;border-color:#a9adb6"></div><div class="t" style="left:541px;top:235px;">18</div><div style="left:587px;top:234px;width:14px;height:8px;background:#e1e1e1;border:1px solid #b4b4b4"></div><div style="left:587px;top:242px;width:14px;height:8px;background:#e1e1e1;border:1px solid #b4b4b4"></div><svg style="position:absolute;left:587px;top:234px" width="14" height="16" viewBox="0 0 14 16"><path d="M4.2 5.6L7 2.6L9.8 5.6Z M4.2 10.4L7 13.4L9.8 10.4Z" fill="#111"/></svg>
<div style="left:427px;top:274px;width:257px;height:2px;border-top:1px solid #a0a0a0;border-bottom:1px solid #fff"></div>
<div class="btn" style="left:428px;top:283px;width:78px;height:22px;line-height:18px;border:2px solid #0078d7">OK</div>
<div class="btn" style="left:516px;top:283px;width:78px;height:22px;line-height:20px">Cancel</div>
<div class="btn" style="left:604px;top:283px;width:78px;height:22px;line-height:20px;background:#cccccc;border-color:#bfbfbf;color:#a0a0a0;text-shadow:1px 1px 0 #fff">Apply</div>
</body></html>
